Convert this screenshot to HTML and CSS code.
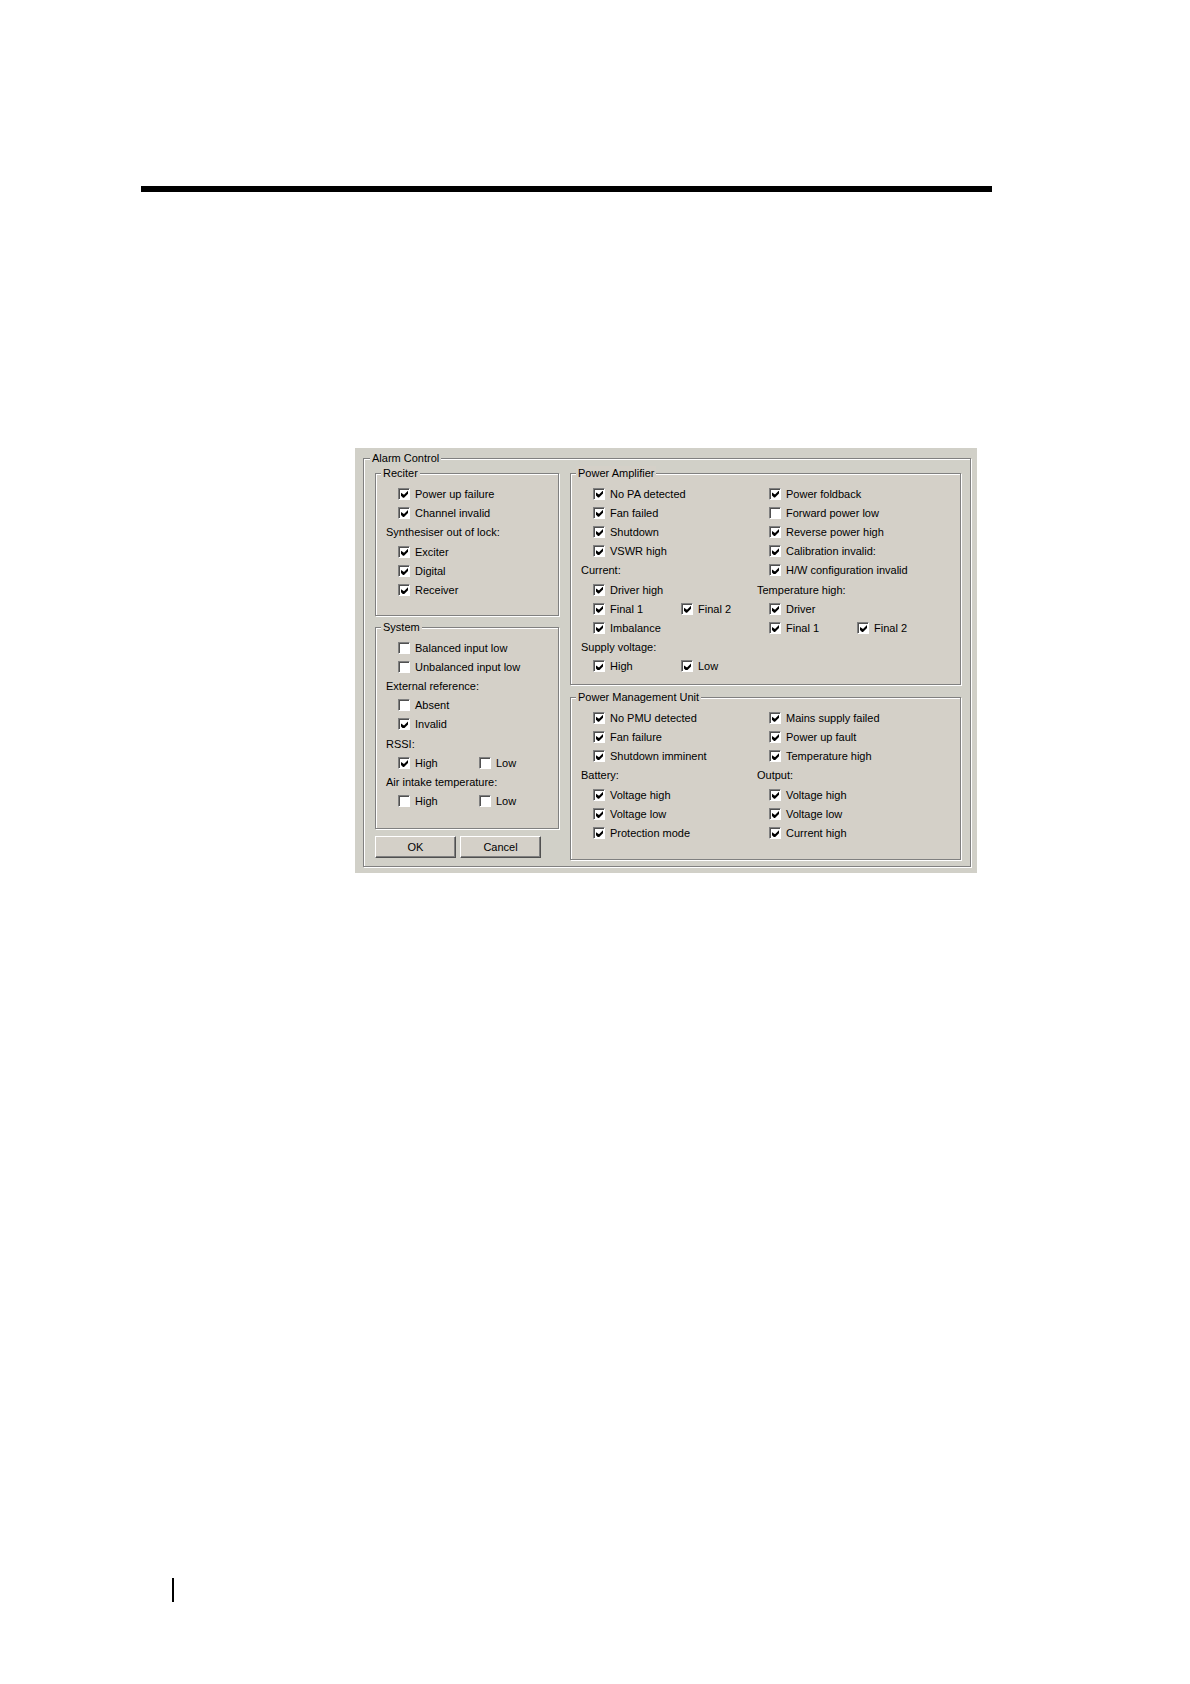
FILE: index.html
```html
<!DOCTYPE html>
<html lang="en">
<head>
<meta charset="utf-8">
<title>Alarm Control</title>
<link rel="stylesheet" href="styles.css">
</head>
<body>
<main class="page">
  <hr class="rule">
  <form class="dialog">
    <fieldset class="group outer">
      <legend>Alarm Control</legend>
      <div class="columns">
        <div class="side">
          <fieldset class="group reciter">
            <legend>Reciter</legend>
            <div class="rows">
              <div class="row"><label class="check"><input type="checkbox" checked>Power up failure</label></div>
              <div class="row"><label class="check"><input type="checkbox" checked>Channel invalid</label></div>
              <p class="heading">Synthesiser out of lock:</p>
              <div class="row"><label class="check"><input type="checkbox" checked>Exciter</label></div>
              <div class="row"><label class="check"><input type="checkbox" checked>Digital</label></div>
              <div class="row"><label class="check"><input type="checkbox" checked>Receiver</label></div>
            </div>
          </fieldset>
          <fieldset class="group system">
            <legend>System</legend>
            <div class="rows">
              <div class="row"><label class="check"><input type="checkbox">Balanced input low</label></div>
              <div class="row"><label class="check"><input type="checkbox">Unbalanced input low</label></div>
              <p class="heading">External reference:</p>
              <div class="row"><label class="check"><input type="checkbox">Absent</label></div>
              <div class="row"><label class="check"><input type="checkbox" checked>Invalid</label></div>
              <p class="heading">RSSI:</p>
              <div class="row pair"><label class="check"><input type="checkbox" checked>High</label><label class="check"><input type="checkbox">Low</label></div>
              <p class="heading">Air intake temperature:</p>
              <div class="row pair"><label class="check"><input type="checkbox">High</label><label class="check"><input type="checkbox">Low</label></div>
            </div>
          </fieldset>
          <div class="buttons">
            <button type="button">OK</button>
            <button type="button">Cancel</button>
          </div>
        </div>
        <div class="main">
          <fieldset class="group amplifier">
            <legend>Power Amplifier</legend>
            <div class="split">
              <div class="rows">
                <div class="row"><label class="check"><input type="checkbox" checked>No PA detected</label></div>
                <div class="row"><label class="check"><input type="checkbox" checked>Fan failed</label></div>
                <div class="row"><label class="check"><input type="checkbox" checked>Shutdown</label></div>
                <div class="row"><label class="check"><input type="checkbox" checked>VSWR high</label></div>
                <p class="heading">Current:</p>
                <div class="row"><label class="check"><input type="checkbox" checked>Driver high</label></div>
                <div class="row pair"><label class="check"><input type="checkbox" checked>Final 1</label><label class="check"><input type="checkbox" checked>Final 2</label></div>
                <div class="row"><label class="check"><input type="checkbox" checked>Imbalance</label></div>
                <p class="heading">Supply voltage:</p>
                <div class="row pair"><label class="check"><input type="checkbox" checked>High</label><label class="check"><input type="checkbox" checked>Low</label></div>
              </div>
              <div class="rows">
                <div class="row"><label class="check"><input type="checkbox" checked>Power foldback</label></div>
                <div class="row"><label class="check"><input type="checkbox">Forward power low</label></div>
                <div class="row"><label class="check"><input type="checkbox" checked>Reverse power high</label></div>
                <div class="row"><label class="check"><input type="checkbox" checked>Calibration invalid:</label></div>
                <div class="row"><label class="check"><input type="checkbox" checked>H/W configuration invalid</label></div>
                <p class="heading">Temperature high:</p>
                <div class="row"><label class="check"><input type="checkbox" checked>Driver</label></div>
                <div class="row pair"><label class="check"><input type="checkbox" checked>Final 1</label><label class="check"><input type="checkbox" checked>Final 2</label></div>
              </div>
            </div>
          </fieldset>
          <fieldset class="group management">
            <legend>Power Management Unit</legend>
            <div class="split">
              <div class="rows">
                <div class="row"><label class="check"><input type="checkbox" checked>No PMU detected</label></div>
                <div class="row"><label class="check"><input type="checkbox" checked>Fan failure</label></div>
                <div class="row"><label class="check"><input type="checkbox" checked>Shutdown imminent</label></div>
                <p class="heading">Battery:</p>
                <div class="row"><label class="check"><input type="checkbox" checked>Voltage high</label></div>
                <div class="row"><label class="check"><input type="checkbox" checked>Voltage low</label></div>
                <div class="row"><label class="check"><input type="checkbox" checked>Protection mode</label></div>
              </div>
              <div class="rows">
                <div class="row"><label class="check"><input type="checkbox" checked>Mains supply failed</label></div>
                <div class="row"><label class="check"><input type="checkbox" checked>Power up fault</label></div>
                <div class="row"><label class="check"><input type="checkbox" checked>Temperature high</label></div>
                <p class="heading">Output:</p>
                <div class="row"><label class="check"><input type="checkbox" checked>Voltage high</label></div>
                <div class="row"><label class="check"><input type="checkbox" checked>Voltage low</label></div>
                <div class="row"><label class="check"><input type="checkbox" checked>Current high</label></div>
              </div>
            </div>
          </fieldset>
        </div>
      </div>
    </fieldset>
  </form>
  <footer class="footer"><div class="folio-bar"></div></footer>
</main>
</body>
</html>
```

FILE: styles.css
```css
* {
  box-sizing: border-box;
}

body {
  margin: 0;
  background: #fff;
  color: #000;
  font: 11px/14px "Liberation Sans", Arial, sans-serif;
}

.page {
  display: flex;
  flex-direction: column;
  min-height: 100vh;
  padding: 186px 198px 82px 141px;
}

.rule {
  width: 100%;
  height: 6px;
  margin: 0;
  border: 0;
  background: #000;
}

.dialog {
  margin: 256px 15px 0 214px;
  padding: 3px 6px 6px 8px;
  background: #d1d0c8;
}

/* Etched group boxes */
.group {
  min-width: 0;
  margin: 0;
  padding: 4px 5px 0;
  border: 1px solid #808080;
  box-shadow: 1px 1px 0 #fff, inset 1px 1px 0 #fff;
}

.group legend {
  height: 14px;
  padding: 0 2px;
  background: #d4d0c8;
}

.group.outer {
  padding: 1px 9px 6px 6px;
}

.outer > legend {
  background: #d1d0c8;
}

.columns {
  display: grid;
  grid-template-columns: 184px 1fr;
  gap: 11px;
  padding-left: 5px;
}

.side,
.main {
  display: flex;
  flex-direction: column;
  gap: 4px;
}

.main {
  gap: 5px;
}

.side .group,
.main .group {
  background: #d4d0c8;
}

.rows {
  display: grid;
  padding-left: 5px;
}

.reciter .rows {
  min-height: 116px;
  margin-bottom: 15px;
}

.system .rows {
  min-height: 173px;
  margin-bottom: 17px;
}

/* Ten equal rows, even where a column fills only part of them */
.amplifier .rows {
  grid-template-rows: repeat(10, 1fr);
  min-height: 192px;
  margin-bottom: 8px;
}

.management .rows {
  min-height: 135px;
  margin-bottom: 16px;
}

.split {
  display: grid;
  grid-template-columns: 176px 1fr;
}

.row {
  display: flex;
  align-items: center;
  padding-left: 12px;
}

.heading {
  align-self: center;
  margin: 0;
}

.pair .check:first-child {
  width: 88px;
}

.side .pair .check:first-child {
  width: 81px;
}

.check {
  display: flex;
  align-items: center;
  gap: 5px;
  white-space: nowrap;
}

.check input {
  flex: none;
  width: 12px;
  height: 12px;
  margin: 0;
  appearance: none;
  border: 1px solid;
  border-color: #808080 #fff #fff #808080;
  background: #fff;
  box-shadow: inset 1px 1px 0 #505050;
}

.check input:checked::before {
  display: block;
  width: 7px;
  height: 7px;
  margin: 2px;
  background: #000;
  clip-path: polygon(0 2px, 3px 4px, 7px 0, 7px 3px, 3px 7px, 2px 7px, 0 5px);
  content: "";
}

.buttons {
  display: flex;
  gap: 4px;
  padding-top: 3px;
}

.buttons button {
  width: 81px;
  height: 22px;
  padding: 0;
  border: 1px solid;
  border-color: #fff #505050 #505050 #fff;
  background: #d4d0c8;
  box-shadow: inset -1px -1px 0 #808080;
  color: inherit;
  font: inherit;
}

.footer {
  margin-top: auto;
  padding-left: 31px;
}

.folio-bar {
  width: 2px;
  height: 24px;
  background: #000;
}
```
